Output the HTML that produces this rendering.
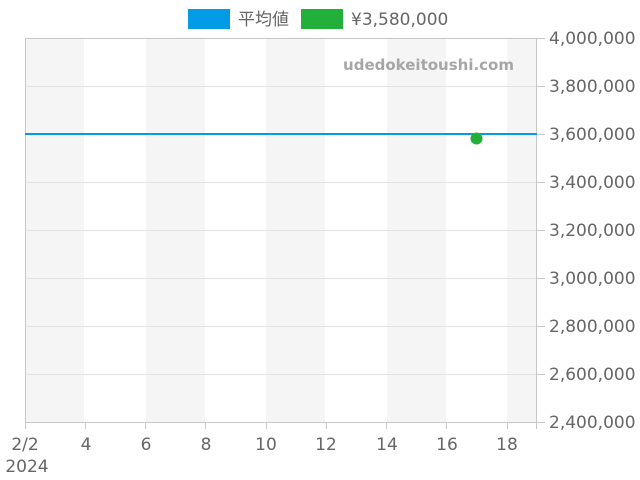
<!DOCTYPE html>
<html><head><meta charset="utf-8"><style>
html,body{margin:0;padding:0;background:#fff;width:640px;height:480px;overflow:hidden}
text{font-family:"DejaVu Sans","Liberation Sans","Noto Sans CJK JP",sans-serif;fill:#666;font-size:17px}
</style></head><body>
<svg width="640" height="480" xmlns="http://www.w3.org/2000/svg">
<rect x="188" y="9" width="42" height="20" fill="#039be5"/>
<text x="238" y="25">平均値</text>
<rect x="301" y="9" width="42" height="20" fill="#22b03a"/>
<text x="351" y="25">¥3,580,000</text>
<g fill="#f5f5f5">
<rect x="25" y="38" width="59" height="384"/>
<rect x="146" y="38" width="59" height="384"/>
<rect x="266" y="38" width="59" height="384"/>
<rect x="387" y="38" width="59" height="384"/>
<rect x="507" y="38" width="30" height="384"/>
</g>
<g stroke="#e2e2e2" stroke-width="1">
<line x1="25" x2="537" y1="86.5" y2="86.5"/>
<line x1="25" x2="537" y1="182.5" y2="182.5"/>
<line x1="25" x2="537" y1="230.5" y2="230.5"/>
<line x1="25" x2="537" y1="278.5" y2="278.5"/>
<line x1="25" x2="537" y1="326.5" y2="326.5"/>
<line x1="25" x2="537" y1="374.5" y2="374.5"/>
</g>
<rect x="25.5" y="38.5" width="511" height="384" fill="none" stroke="#c8c8c8"/>
<g stroke="#c8c8c8">
<line x1="537" x2="545" y1="38.5" y2="38.5"/><line x1="537" x2="545" y1="86.5" y2="86.5"/>
<line x1="537" x2="545" y1="134.5" y2="134.5"/><line x1="537" x2="545" y1="182.5" y2="182.5"/>
<line x1="537" x2="545" y1="230.5" y2="230.5"/><line x1="537" x2="545" y1="278.5" y2="278.5"/>
<line x1="537" x2="545" y1="326.5" y2="326.5"/><line x1="537" x2="545" y1="374.5" y2="374.5"/>
<line x1="537" x2="545" y1="422.5" y2="422.5"/>
<line x1="25.5" x2="25.5" y1="422" y2="429"/><line x1="85.5" x2="85.5" y1="422" y2="429"/>
<line x1="145.5" x2="145.5" y1="422" y2="429"/><line x1="205.5" x2="205.5" y1="422" y2="429"/>
<line x1="266.5" x2="266.5" y1="422" y2="429"/><line x1="326.5" x2="326.5" y1="422" y2="429"/>
<line x1="386.5" x2="386.5" y1="422" y2="429"/><line x1="446.5" x2="446.5" y1="422" y2="429"/>
<line x1="507.5" x2="507.5" y1="422" y2="429"/><line x1="536.5" x2="536.5" y1="422" y2="429"/>
</g>
<text x="514" y="70" text-anchor="end" style="font-weight:bold;fill:#a6a6a6;font-size:15px">udedokeitoushi.com</text>
<line x1="25" x2="537" y1="134" y2="134" stroke="#039be5" stroke-width="2"/>
<circle cx="476.5" cy="138.5" r="6" fill="#22b03a"/>
<g>
<text x="549" y="44">4,000,000</text>
<text x="549" y="92">3,800,000</text>
<text x="549" y="140">3,600,000</text>
<text x="549" y="188">3,400,000</text>
<text x="549" y="236">3,200,000</text>
<text x="549" y="284">3,000,000</text>
<text x="549" y="332">2,800,000</text>
<text x="549" y="380">2,600,000</text>
<text x="549" y="428">2,400,000</text>
</g>
<g text-anchor="middle">
<text x="25" y="450">2/2</text>
<text x="86" y="450">4</text>
<text x="146" y="450">6</text>
<text x="206" y="450">8</text>
<text x="266" y="450">10</text>
<text x="326" y="450">12</text>
<text x="387" y="450">14</text>
<text x="447" y="450">16</text>
<text x="507" y="450">18</text>
<text x="27" y="472">2024</text>
</g>
</svg>
</body></html>
